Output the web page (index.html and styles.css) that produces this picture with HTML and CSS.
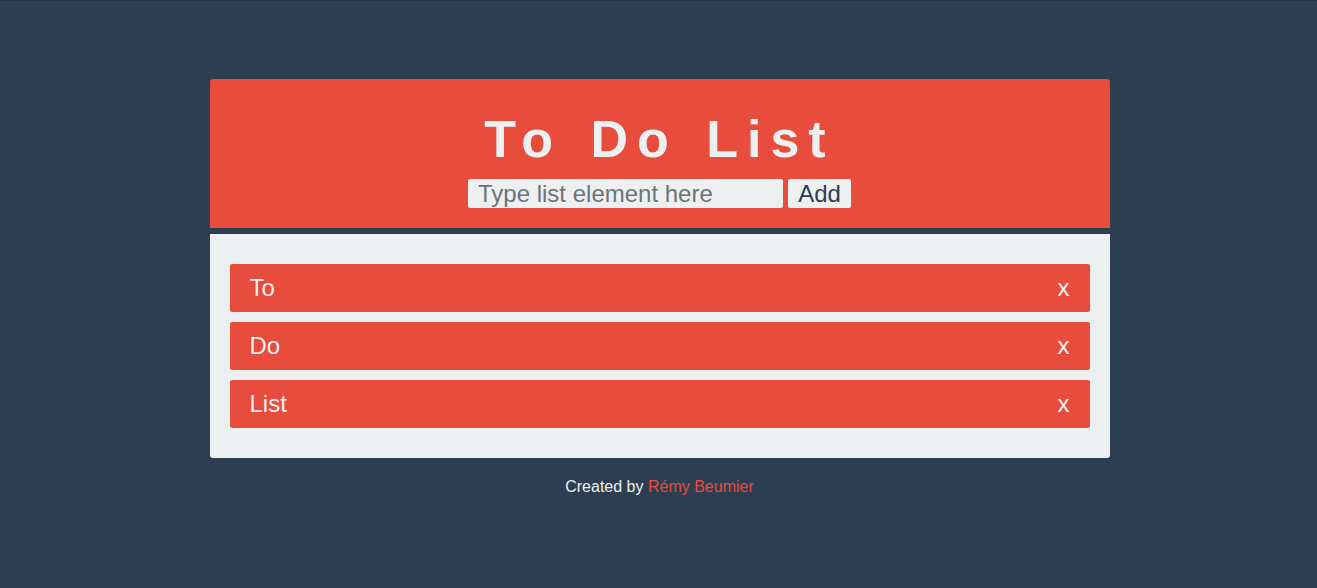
FILE: index.html
```html
<!DOCTYPE html>
<html>
<head>
<meta charset="utf-8">
<link rel="stylesheet" href="styles.css">
</head>
<body>
<div class="app">
  <header class="head">
    <h1 class="title">To Do List</h1>
    <form class="add-form">
      <input class="add-input" type="text" placeholder="Type list element here">
      <button class="add-btn" type="button">Add</button>
    </form>
  </header>
  <ul class="list">
    <li class="item"><span>To</span><span class="del">x</span></li>
    <li class="item"><span>Do</span><span class="del">x</span></li>
    <li class="item"><span>List</span><span class="del">x</span></li>
  </ul>
</div>
<p class="footer">Created by <a class="author" href="#">Rémy Beumier</a></p>
</body>
</html>
```
FILE: styles.css
```css
html, body {
  margin: 0;
  padding: 0;
}
body {
  background: #2c3e50;
  font-family: "Liberation Sans", Arial, sans-serif;
  color: #ecf0f1;
  border-top: 1px solid #243444;
  padding: 78px 0 0 2px;
}
.app {
  width: 900px;
  margin: 0 auto;
}
.head {
  background: #e74c3c;
  border-radius: 3px 3px 0 0;
  padding: 28px 0 20px;
  text-align: center;
}
.title {
  margin: 0;
  font-size: 52px;
  line-height: 64px;
  font-weight: bold;
  letter-spacing: 9px;
  word-spacing: 5px;
  color: #ecf0f1;
}
.add-form {
  margin-top: 8px;
  display: flex;
  justify-content: center;
  gap: 5px;
}
.add-input {
  width: 315px;
  height: 29px;
  box-sizing: border-box;
  border: none;
  border-radius: 2px;
  background: #ecf0f1;
  padding: 0 10px;
  font-family: inherit;
  font-size: 24px;
  color: #2c3e50;
  outline: none;
}
.add-input::placeholder {
  color: #6c7378;
}
.add-btn {
  height: 29px;
  width: 63px;
  border: none;
  border-radius: 2px;
  background: #ecf0f1;
  color: #2c3e50;
  font-family: inherit;
  font-size: 24px;
  padding: 0;
}
.list {
  list-style: none;
  margin: 6px 0 0;
  padding: 30px 20px;
  background: #ecf0f1;
  border-radius: 0 0 3px 3px;
  display: flex;
  flex-direction: column;
  gap: 10px;
}
.item {
  background: #e74c3c;
  height: 48px;
  border-radius: 2px;
  display: flex;
  align-items: center;
  justify-content: space-between;
  padding: 0 20px;
  font-size: 24px;
  color: #ecf0f1;
}
.footer {
  text-align: center;
  margin: 20px 0 0;
  font-size: 16px;
  line-height: 18px;
}
.author {
  color: #e74c3c;
  text-decoration: none;
}
```
